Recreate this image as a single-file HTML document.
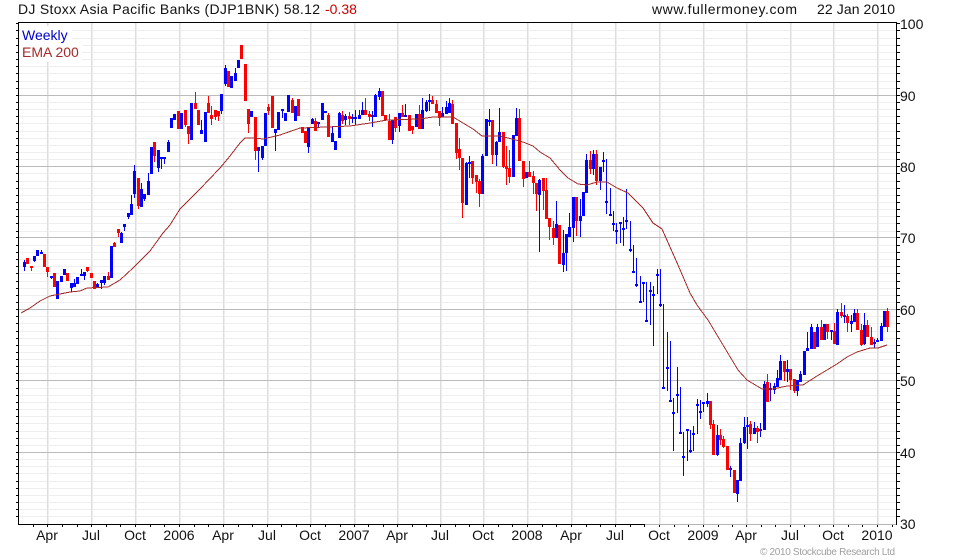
<!DOCTYPE html>
<html><head><meta charset="utf-8"><style>
html,body{margin:0;padding:0;background:#fff;width:980px;height:560px;overflow:hidden}
svg{display:block;position:absolute;left:0;top:0}
text{font-family:"Liberation Sans",Arial,sans-serif;font-size:14px;fill:#111}
</style></head><body>
<svg width="980" height="560" viewBox="0 0 980 560">
<g fill="none" shape-rendering="crispEdges">
<path stroke="#eeeeee" d="M19 516.5H896M19 509.5H896M19 502.5H896M19 495.5H896M19 488.5H896M19 481.5H896M19 473.5H896M19 466.5H896M19 459.5H896M19 445.5H896M19 438.5H896M19 431.5H896M19 423.5H896M19 416.5H896M19 409.5H896M19 402.5H896M19 395.5H896M19 388.5H896M19 373.5H896M19 366.5H896M19 359.5H896M19 352.5H896M19 345.5H896M19 338.5H896M19 331.5H896M19 323.5H896M19 316.5H896M19 302.5H896M19 295.5H896M19 288.5H896M19 281.5H896M19 273.5H896M19 266.5H896M19 259.5H896M19 252.5H896M19 245.5H896M19 231.5H896M19 223.5H896M19 216.5H896M19 209.5H896M19 202.5H896M19 195.5H896M19 188.5H896M19 181.5H896M19 173.5H896M19 159.5H896M19 152.5H896M19 145.5H896M19 138.5H896M19 131.5H896M19 123.5H896M19 116.5H896M19 109.5H896M19 102.5H896M19 88.5H896M19 81.5H896M19 73.5H896M19 66.5H896M19 59.5H896M19 52.5H896M19 45.5H896M19 38.5H896M19 30.5H896"/>
<path stroke="#eeeeee" d="M48.5 23V524M92.5 23V524M136.5 23V524M180.5 23V524M224.5 23V524M268.5 23V524M311.5 23V524M355.5 23V524M398.5 23V524M441.5 23V524M484.5 23V524M528.5 23V524M572.5 23V524M616.5 23V524M660.5 23V524M704.5 23V524M747.5 23V524M791.5 23V524M834.5 23V524M878.5 23V524"/>
<path stroke="#dddddd" d="M47.5 23V524M91.5 23V524M135.5 23V524M179.5 23V524M223.5 23V524M267.5 23V524M310.5 23V524M354.5 23V524M397.5 23V524M440.5 23V524M483.5 23V524M527.5 23V524M571.5 23V524M615.5 23V524M659.5 23V524M703.5 23V524M746.5 23V524M790.5 23V524M833.5 23V524M877.5 23V524"/>
<path stroke="#bbbbbb" d="M19 95.5H896M19 166.5H896M19 237.5H896M19 309.5H896M19 380.5H896M19 452.5H896"/>
<path stroke="#000" d="M18.5 22V525M896.5 22V525M18 22.5H897M18 524.5H645"/>
<path stroke="#b5b5b5" d="M645 524.5H896"/>
<path stroke="#000" d="M16 23.5h2M16 516.5h2M16 509.5h2M16 502.5h2M16 495.5h2M16 488.5h2M16 481.5h2M16 473.5h2M16 466.5h2M16 459.5h2M16 452.5h2M16 445.5h2M16 438.5h2M16 431.5h2M16 423.5h2M16 416.5h2M16 409.5h2M16 402.5h2M16 395.5h2M16 388.5h2M16 380.5h2M16 373.5h2M16 366.5h2M16 359.5h2M16 352.5h2M16 345.5h2M16 338.5h2M16 331.5h2M16 323.5h2M16 316.5h2M16 309.5h2M16 302.5h2M16 295.5h2M16 288.5h2M16 281.5h2M16 273.5h2M16 266.5h2M16 259.5h2M16 252.5h2M16 245.5h2M16 237.5h2M16 231.5h2M16 223.5h2M16 216.5h2M16 209.5h2M16 202.5h2M16 195.5h2M16 188.5h2M16 181.5h2M16 173.5h2M16 166.5h2M16 159.5h2M16 152.5h2M16 145.5h2M16 138.5h2M16 131.5h2M16 123.5h2M16 116.5h2M16 109.5h2M16 102.5h2M16 95.5h2M16 88.5h2M16 81.5h2M16 73.5h2M16 66.5h2M16 59.5h2M16 52.5h2M16 45.5h2M16 38.5h2M16 30.5h2"/>
<path stroke="#000" d="M897 23.5h3M897 516.5h3M897 509.5h3M897 502.5h3M897 495.5h3M897 488.5h3M897 481.5h3M897 473.5h3M897 466.5h3M897 459.5h3M897 452.5h3M897 445.5h3M897 438.5h3M897 431.5h3M897 423.5h3M897 416.5h3M897 409.5h3M897 402.5h3M897 395.5h3M897 388.5h3M897 380.5h3M897 373.5h3M897 366.5h3M897 359.5h3M897 352.5h3M897 345.5h3M897 338.5h3M897 331.5h3M897 323.5h3M897 316.5h3M897 309.5h3M897 302.5h3M897 295.5h3M897 288.5h3M897 281.5h3M897 273.5h3M897 266.5h3M897 259.5h3M897 252.5h3M897 245.5h3M897 237.5h3M897 231.5h3M897 223.5h3M897 216.5h3M897 209.5h3M897 202.5h3M897 195.5h3M897 188.5h3M897 181.5h3M897 173.5h3M897 166.5h3M897 159.5h3M897 152.5h3M897 145.5h3M897 138.5h3M897 131.5h3M897 123.5h3M897 116.5h3M897 109.5h3M897 102.5h3M897 95.5h3M897 88.5h3M897 81.5h3M897 73.5h3M897 66.5h3M897 59.5h3M897 52.5h3M897 45.5h3M897 38.5h3M897 30.5h3"/>
<path stroke="#000" d="M33.5 525v2M47.5 525v2M62.5 525v2M77.5 525v2M91.5 525v2M106.5 525v2M120.5 525v2M135.5 525v2M150.5 525v2M164.5 525v2M179.5 525v2M194.5 525v2M208.5 525v2M223.5 525v2M238.5 525v2M252.5 525v2M267.5 525v2M281.5 525v2M296.5 525v2M310.5 525v2M325.5 525v2M340.5 525v2M354.5 525v2M368.5 525v2M383.5 525v2M397.5 525v2M412.5 525v2M426.5 525v2M440.5 525v2M455.5 525v2M469.5 525v2M483.5 525v2M498.5 525v2M512.5 525v2M527.5 525v2M542.5 525v2M556.5 525v2M571.5 525v2M586.5 525v2M600.5 525v2M615.5 525v2M630.5 525v2M644.5 525v2M659.5 525v2M674.5 525v2M688.5 525v2M703.5 525v2M718.5 525v2M732.5 525v2M746.5 525v2M761.5 525v2M775.5 525v2M790.5 525v2M804.5 525v2M819.5 525v2M833.5 525v2M848.5 525v2M862.5 525v2M877.5 525v2M892.5 525v2"/>

<!-- blue wicks -->
<path stroke="#0000ff" d="M24.5 260V271M34.5 256V262M41.5 250V254M51.5 276V279M71.5 283V292M74.5 279V287M81.5 269V276M84.5 272V280M97.5 283V288M101.5 280V289M104.5 276V285M121.5 232V243M124.5 224V231M128.5 213V219M131.5 195V215M134.5 165V198M141.5 183V207M144.5 194V201M148.5 173V195M158.5 150V172M161.5 157V169M164.5 157V164M168.5 140V152M201.5 120V134M221.5 94V114M225.5 65V86M235.5 68V81M258.5 147V172M262.5 146V160M275.5 129V151M282.5 109V118M308.5 128V153M312.5 118V124M318.5 122V127M332.5 126V142M339.5 112V138M345.5 114V125M352.5 114V123M355.5 110V125M359.5 110V119M362.5 102V115M372.5 111V127M375.5 94V117M379.5 88V100M392.5 120V144M399.5 113V132M405.5 104V117M422.5 98V129M426.5 100V112M429.5 94V111M442.5 107V117M446.5 101V114M449.5 98V113M466.5 162V205M469.5 156V178M482.5 154V194M489.5 109V126M496.5 141V166M499.5 108V142M516.5 108V136M539.5 179V252M556.5 201V238M563.5 230V272M566.5 234V271M569.5 213V237M573.5 197V242M580.5 199V237M586.5 154V193M593.5 150V175M600.5 167V190M603.5 152V172M606.5 159V214M610.5 188V216M613.5 211V231M616.5 223V244M620.5 222V243M623.5 217V246M626.5 189V229M630.5 221V252M633.5 245V273M636.5 258V287M640.5 276V303M643.5 282V302M646.5 282V322M650.5 282V325M653.5 286V346M657.5 269V294M660.5 269V307M663.5 304V389M667.5 332V391M670.5 341V402M673.5 398V451M677.5 367V413M680.5 387V434M683.5 432V476M687.5 429V461M690.5 430V453M693.5 426V451M697.5 399V434M700.5 400V419M703.5 402V412M707.5 393V407M717.5 425V456M730.5 466V477M737.5 480V502M740.5 438V481M744.5 417V444M747.5 417V449M754.5 422V434M760.5 423V437M764.5 381V430M770.5 383V401M774.5 383V394M777.5 370V387M780.5 355V380M787.5 360V382M797.5 380V396M800.5 371V382M807.5 332V351M811.5 324V349M817.5 324V347M831.5 330V340M837.5 309V345M844.5 305V323M851.5 315V332M854.5 309V322M864.5 313V345M874.5 339V348M877.5 338V342M881.5 323V341"/>
<!-- blue bodies -->
<path stroke="#0000ff" stroke-width="3" d="M24.5 262V267M34.5 256V261M37.5 250V256M41.5 252V254M51.5 276V278M57.5 281V299M61.5 276V282M64.5 269V275M71.5 283V288M74.5 283V287M77.5 277V284M81.5 274V276M84.5 272V276M97.5 284V288M101.5 280V283M104.5 276V283M111.5 246V278M121.5 233V243M124.5 224V227M128.5 213V217M131.5 204V215M134.5 171V194M141.5 189V207M144.5 194V199M148.5 181V195M151.5 147V174M158.5 150V168M161.5 157V159M164.5 157V159M168.5 142V152M171.5 118V128M174.5 114V120M181.5 113V129M191.5 103V140M201.5 130V134M205.5 112V142M221.5 94V111M225.5 68V84M231.5 76V88M235.5 73V81M238.5 60V68M251.5 111V117M258.5 147V151M262.5 146V158M265.5 113V146M275.5 129V133M278.5 112V130M282.5 109V111M285.5 113V121M288.5 95V112M295.5 106V121M308.5 128V147M312.5 119V124M318.5 122V124M322.5 103V120M325.5 111V113M332.5 133V142M335.5 141V150M339.5 113V138M345.5 116V120M352.5 117V119M355.5 117V119M359.5 115V119M362.5 110V115M372.5 115V117M375.5 95V117M379.5 91V97M392.5 120V140M399.5 113V126M405.5 115V117M416.5 114V127M422.5 110V129M426.5 102V111M429.5 100V102M442.5 113V117M446.5 107V114M449.5 103V113M466.5 163V205M469.5 162V164M482.5 156V194M486.5 119V156M489.5 120V122M496.5 142V155M499.5 132V142M513.5 135V177M516.5 118V136M526.5 172V178M539.5 180V195M556.5 224V238M563.5 253V265M566.5 234V253M569.5 227V237M573.5 197V228M580.5 216V221M583.5 192V216M586.5 160V193M593.5 154V169M600.5 167V181M603.5 160V162M606.5 201V203M610.5 214V216M613.5 223V225M616.5 230V232M620.5 222V224M623.5 228V230M626.5 220V222M630.5 249V251M633.5 271V273M636.5 284V286M640.5 301V303M643.5 282V284M646.5 320V322M650.5 290V292M653.5 294V296M657.5 274V276M660.5 304V306M663.5 387V389M667.5 367V369M670.5 400V402M673.5 412V414M677.5 394V396M680.5 432V434M683.5 456V458M687.5 429V431M690.5 450V452M693.5 433V435M697.5 404V406M700.5 411V413M703.5 402V404M707.5 401V404M717.5 435V455M730.5 468V470M737.5 480V494M740.5 443V481M744.5 427V443M747.5 425V427M754.5 428V434M760.5 429V431M764.5 384V430M770.5 388V390M774.5 386V390M777.5 378V387M780.5 361V380M787.5 369V372M797.5 380V391M800.5 374V382M804.5 351V375M807.5 348V351M811.5 327V349M817.5 327V347M824.5 324V340M831.5 330V332M837.5 312V345M844.5 315V317M851.5 321V324M854.5 313V322M864.5 325V344M874.5 342V344M877.5 340V342M881.5 326V341M884.5 311V327"/>
<!-- red wicks -->
<path stroke="#ff0000" d="M31.5 266V271M47.5 267V277M87.5 267V272M108.5 272V280M114.5 242V247M118.5 229V237M138.5 178V209M154.5 142V162M185.5 110V127M188.5 126V144M195.5 92V109M208.5 96V113M211.5 106V125M215.5 110V120M218.5 111V121M248.5 109V133M255.5 117V160M268.5 104V115M292.5 98V113M315.5 118V131M328.5 113V137M342.5 111V124M349.5 112V125M365.5 98V115M369.5 111V121M385.5 115V121M389.5 114V140M395.5 117V132M402.5 105V117M412.5 126V134M419.5 105V129M432.5 96V104M436.5 100V113M439.5 111V126M452.5 100V124M456.5 123V159M459.5 138V170M462.5 158V218M472.5 161V184M476.5 175V193M479.5 179V207M492.5 120V164M503.5 132V168M506.5 146V185M509.5 150V183M519.5 109V161M523.5 161V187M529.5 161V177M533.5 171V194M536.5 183V211M543.5 178V210M546.5 178V219M549.5 218V240M553.5 221V245M576.5 197V236M590.5 151V174M596.5 150V185M710.5 401V429M713.5 420V455M720.5 429V445M723.5 436V448M750.5 421V441M757.5 426V443M767.5 374V402M784.5 361V381M790.5 369V390M794.5 379V393M821.5 320V340M827.5 324V339M834.5 323V344M841.5 303V318M847.5 314V332M857.5 309V330M861.5 324V346M867.5 320V337M871.5 327V345M887.5 308V332"/>
<!-- red bodies -->
<path stroke="#ff0000" stroke-width="3" d="M27.5 258V264M31.5 266V268M44.5 254V267M47.5 267V272M54.5 273V287M67.5 273V281M87.5 267V271M91.5 273V278M94.5 281V289M108.5 276V280M114.5 243V247M118.5 229V233M138.5 178V206M154.5 142V156M178.5 111V129M185.5 110V125M188.5 126V134M195.5 103V109M198.5 110V125M208.5 103V113M211.5 115V119M215.5 110V117M218.5 111V116M228.5 71V87M241.5 45V59M245.5 64V101M248.5 109V124M255.5 117V151M268.5 107V111M272.5 96V128M292.5 100V113M298.5 99V116M302.5 127V133M305.5 131V143M315.5 121V131M328.5 115V137M342.5 115V121M349.5 116V119M365.5 110V115M369.5 114V117M382.5 91V116M385.5 115V120M389.5 121V140M395.5 117V128M402.5 113V117M409.5 115V131M412.5 126V130M419.5 114V129M432.5 100V104M436.5 104V113M439.5 111V118M452.5 104V124M456.5 123V153M459.5 149V158M462.5 158V203M472.5 161V178M476.5 175V182M479.5 181V194M492.5 120V155M503.5 132V167M506.5 166V169M509.5 168V177M519.5 118V161M523.5 161V179M529.5 172V177M533.5 176V183M536.5 183V194M543.5 178V191M546.5 190V219M549.5 218V227M553.5 228V238M559.5 225V264M576.5 197V221M590.5 160V169M596.5 154V181M710.5 401V425M713.5 424V455M720.5 435V440M723.5 439V447M727.5 446V470M734.5 470V493M750.5 424V434M757.5 428V432M767.5 382V402M784.5 361V372M790.5 369V380M794.5 379V391M814.5 332V349M821.5 327V340M827.5 324V332M834.5 331V344M841.5 312V316M847.5 316V323M857.5 313V330M861.5 330V345M867.5 325V337M871.5 337V345M887.5 311V327"/>
</g>
<polyline fill="none" stroke="#a52a2a" stroke-width="1" shape-rendering="crispEdges" points="21,313 30,308 40,301 50,296 60,294 70,292 80,291 87,288 108,287 120,280 133,268 150,251 163,233 170,225 180,209 200,189 220,168 230,156 240,143 245,138 255,138 263,139 280,135 300,128 327,127 350,126 370,123 387,120 420,119 433,117 453,117 463,123 473,129 482,136 500,136 512,139 523,142 533,146 540,152 550,158 560,170 568,178 578,184 587,185 597,182 607,182 617,188 628,193 643,208 653,223 662,229 670,247 678,265 690,293 697,305 708,320 723,345 738,370 747,380 762,389 773,389 787,386 803,385 817,376 837,364 847,357 857,352 870,348 878,348 887,345"/>
<rect x="20" y="26" width="52" height="18" fill="#fff"/>
<rect x="20" y="44" width="62" height="18" fill="#fff"/>
<text x="22" y="40" style="fill:#0000cc">Weekly</text>
<text x="22" y="57" style="fill:#a52a2a">EMA 200</text>
<text x="18" y="14" textLength="302">DJ Stoxx Asia Pacific Banks (DJP1BNK) 58.12</text>
<text x="325" y="14" style="fill:#cc0000">-0.38</text>
<text x="652" y="14" textLength="145">www.fullermoney.com</text>
<text x="817" y="14" textLength="78">22 Jan 2010</text>
<g>
<text x="900" y="29">100</text>
<text x="900" y="101">90</text>
<text x="900" y="172">80</text>
<text x="900" y="243">70</text>
<text x="900" y="315">60</text>
<text x="900" y="386">50</text>
<text x="900" y="458">40</text>
<text x="900" y="529">30</text>
</g>
<g text-anchor="middle">
<text x="47" y="540">Apr</text><text x="91" y="540">Jul</text><text x="135" y="540">Oct</text><text x="179" y="540">2006</text>
<text x="223" y="540">Apr</text><text x="267" y="540">Jul</text><text x="310" y="540">Oct</text><text x="354" y="540">2007</text>
<text x="397" y="540">Apr</text><text x="440" y="540">Jul</text><text x="483" y="540">Oct</text><text x="527" y="540">2008</text>
<text x="571" y="540">Apr</text><text x="615" y="540">Jul</text><text x="659" y="540">Oct</text><text x="703" y="540">2009</text>
<text x="746" y="540">Apr</text><text x="790" y="540">Jul</text><text x="833" y="540">Oct</text><text x="877" y="540">2010</text>
</g>
<text x="760" y="555" textLength="135" style="font-size:10px;fill:#a0a0a0">© 2010 Stockcube Research Ltd</text>
</svg>
</body></html>
